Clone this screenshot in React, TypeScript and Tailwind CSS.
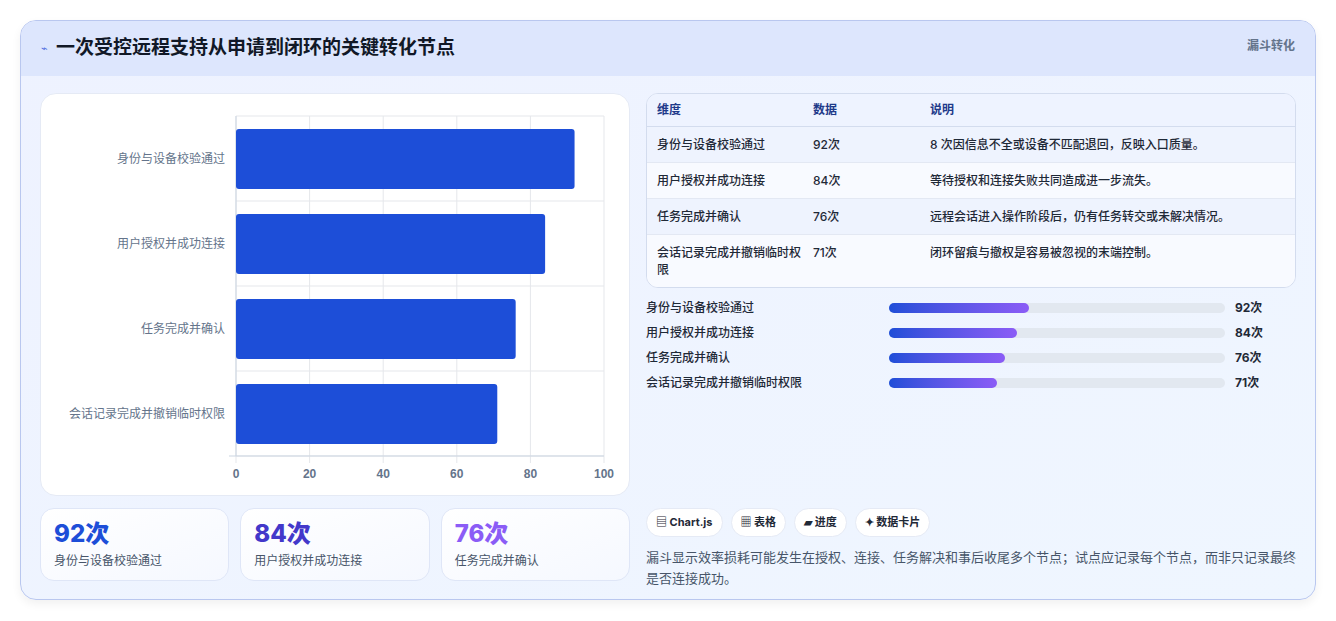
import React from "react";

const rows = [
  { k: "身份与设备校验通过", v: 92, d: "8 次因信息不全或设备不匹配退回，反映入口质量。" },
  { k: "用户授权并成功连接", v: 84, d: "等待授权和连接失败共同造成进一步流失。" },
  { k: "任务完成并确认", v: 76, d: "远程会话进入操作阶段后，仍有任务转交或未解决情况。" },
  { k: "会话记录完成并撤销临时权限", v: 71, d: "闭环留痕与撤权是容易被忽视的末端控制。" },
];

function Chart() {
  const x0 = 195, w = 368, top = 22, band = 85;
  return (
    <svg width="589" height="402" className="block">
      {[0, 20, 40, 60, 80, 100].map((t) => (
        <g key={t}>
          <line x1={x0 + (t * w) / 100} x2={x0 + (t * w) / 100} y1={top} y2={top + band * 4 + 7} stroke="#e5e7eb" />
          <text x={x0 + (t * w) / 100} y={384} textAnchor="middle" fontSize="12" fill="#64748b" fontFamily="Liberation Sans, sans-serif" fontWeight="600">{t}</text>
        </g>
      ))}
      {[0, 1, 2, 3, 4].map((i) => (
        <line key={i} x1={x0} x2={x0 + w} y1={top + band * i} y2={top + band * i} stroke="#e5e7eb" />
      ))}
      <line x1={x0 - 7} x2={x0 + w} y1={top + band * 4} y2={top + band * 4} stroke="#cbd5e1" />
      <line x1={x0} x2={x0} y1={top} y2={top + band * 4} stroke="#cbd5e1" />
      {rows.map((r, i) => (
        <g key={r.k}>
          <rect x={x0} y={top + band * i + 13} width={(r.v * w) / 100} height={60} rx="3" fill="#1d4ed8" />
          <text x={x0 - 11} y={top + band * i + 47} textAnchor="end" fontSize="12" fill="#64748b" fontFamily="Noto Sans CJK SC, sans-serif">{r.k}</text>
        </g>
      ))}
    </svg>
  );
}

export default function App() {
  return (
    <div className="w-[1336px] h-[621px] bg-white pt-[20px] px-[20px]" style={{ fontFamily: "Inter, 'Noto Sans CJK SC', sans-serif" }}>
      <div className="w-[1296px] h-[580px] rounded-[16px] border border-[#b9c7ef] bg-gradient-to-br from-[#eef2ff] to-[#eff6ff] overflow-hidden shadow-[0_4px_10px_rgba(0,0,0,0.06)]">
        <div className="h-[55px] bg-[#dde6fd] flex items-center px-[20px] relative">
          <span className="text-[#4f6de0] text-[11px] mr-[8px]">⌁</span>
          <h1 className="text-[19px] font-bold text-[#111827]">一次受控远程支持从申请到闭环的关键转化节点</h1>
          <span className="absolute right-[20px] top-[16px] text-[12px] font-bold text-[#64748b]">漏斗转化</span>
        </div>
        <div className="flex gap-[16px] px-[19px] pt-[17px]">
          <div className="w-[590px] flex flex-col gap-[12px]">
            <div className="h-[403px] bg-white rounded-[16px] border border-[#e5eaf5]"><Chart /></div>
            <div className="flex gap-[11px]">
              {[["92次", "#1d4ed8"], ["84次", "#4338ca"], ["76次", "#8b5cf6"]].map(([v, c], i) => (
                <div key={v} className="flex-1 h-[73px] rounded-[14px] bg-gradient-to-br from-white to-[#f5f8ff] border border-[#dfe6f7] px-[13px] pt-[10px]">
                  <div className="text-[24px] font-extrabold leading-[30px]" style={{ color: c }}>{v}</div>
                  <div className="text-[12px] text-[#475569] mt-[3px]">{rows[i].k}</div>
                </div>
              ))}
            </div>
          </div>
          <div className="w-[651px] flex flex-col">
            <div className="rounded-[12px] border border-[#d3dcee] overflow-hidden bg-[#f8faff] text-[12px]">
              <div className="flex h-[33px] items-center font-bold text-[#1e3a8a] bg-[#eef3ff] border-b border-[#d3dcee]">
                <div className="w-[166px] pl-[10px]">维度</div><div className="w-[117px]">数据</div><div>说明</div>
              </div>
              {rows.map((r, i) => (
                <div key={r.k} className={`flex py-[9px] text-[#1f2937] font-medium ${i % 2 === 0 ? "bg-[#eef3fe]" : "bg-[#f8faff]"} ${i < 3 ? "border-b border-[#e3e8f3]" : ""}`}>
                  <div className="w-[166px] pl-[10px] pr-[10px] leading-[17px]">{r.k}</div>
                  <div className="w-[117px] leading-[17px]">{r.v}次</div>
                  <div className="leading-[17px]">{r.d}</div>
                </div>
              ))}
            </div>
            <div className="flex flex-col gap-[7px] mt-[11px]">
              {rows.map((r) => (
                <div key={r.k} className="flex items-center h-[18px] text-[12px] font-medium text-[#1f2937]">
                  <div className="w-[243px]">{r.k}</div>
                  <div className="w-[336px] h-[10px] rounded-full bg-[#e2e8f0]">
                    <div className="h-[10px] rounded-full bg-gradient-to-r from-[#1d4ed8] to-[#8b5cf6]" style={{ width: r.v * 1.52 }} />
                  </div>
                  <div className="ml-[10px] font-bold">{r.v}次</div>
                </div>
              ))}
            </div>
            <div className="flex gap-[8px] mt-[116px] text-[11px] font-bold text-[#1f2937]">
              {["▤ Chart.js", "▦ 表格", "▰ 进度", "✦ 数据卡片"].map((t) => (
                <span key={t} className="h-[29px] px-[9px] flex items-center rounded-full bg-white border border-[#e5eaf5]">{t}</span>
              ))}
            </div>
            <p className="mt-[10px] text-[13px] leading-[21px] text-[#475569]">漏斗显示效率损耗可能发生在授权、连接、任务解决和事后收尾多个节点；试点应记录每个节点，而非只记录最终是否连接成功。</p>
          </div>
        </div>
      </div>
    </div>
  );
}
